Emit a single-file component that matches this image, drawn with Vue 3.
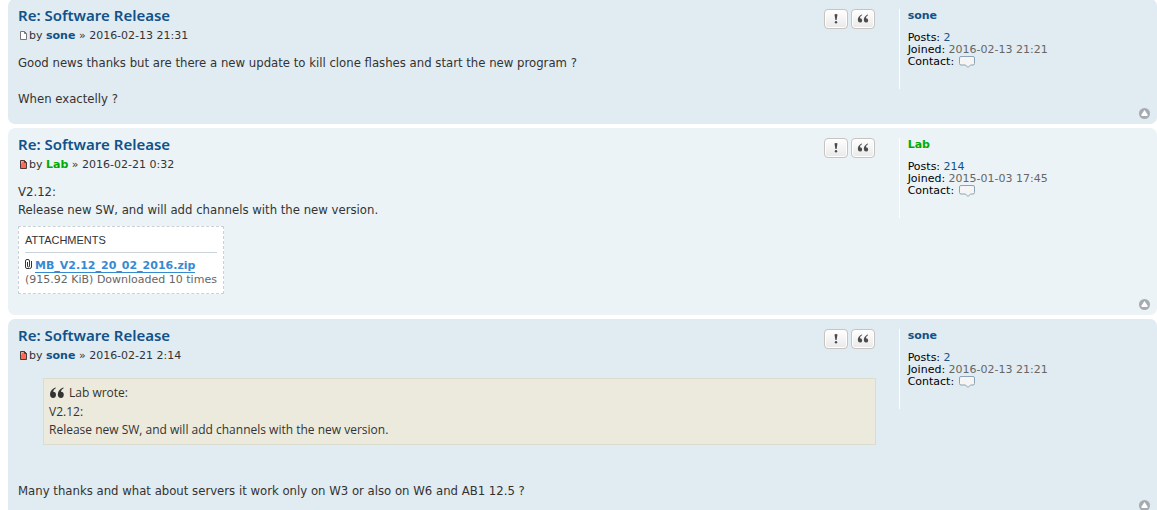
<script setup>
const posts = [
  {
    id: 1, tone: 'bg2', unread: false, title: 'Re: Software Release', author: 'sone', admin: false,
    date: '2016-02-13 21:31', count: '2', joined: '2016-02-13 21:21',
    lines: ['Good news thanks but are there a new update to kill clone flashes and start the new program ?', '', 'When exactelly ?']
  },
  {
    id: 2, tone: 'bg1', unread: true, title: 'Re: Software Release', author: 'Lab', admin: true,
    date: '2016-02-21 0:32', count: '214', joined: '2015-01-03 17:45',
    lines: ['V2.12:', 'Release new SW, and will add channels with the new version.'],
    file: { name: 'MB_V2.12_20_02_2016.zip', info: '(915.92 KiB) Downloaded 10 times' }
  },
  {
    id: 3, tone: 'bg2', unread: true, title: 'Re: Software Release', author: 'sone', admin: false,
    date: '2016-02-21 2:14', count: '2', joined: '2016-02-13 21:21',
    quote: { by: 'Lab wrote:', lines: ['V2.12:', 'Release new SW, and will add channels with the new version.'] },
    lines: ['', 'Many thanks and what about servers it work only on W3 or also on W6 and AB1 12.5 ?']
  }
]
</script>

<template>
  <main class="topic">
    <article v-for="post in posts" :key="post.id" class="post" :class="post.tone">
      <div class="inner">
        <div class="postbody">
          <header class="head">
            <div>
              <h3><a href="#">{{ post.title }}</a></h3>
              <p class="author">
                <a href="#" class="page-icon" aria-label="Post">
                  <svg width="11" height="12" viewBox="0 0 11 12">
                    <path d="M2.5 1.5h4l2 2v6h-6z" :fill="post.unread ? '#ff6a50' : '#fff'" :stroke="post.unread ? '#4a3c3c' : '#777'" />
                    <path d="M6.5 1.5v2h2" fill="none" :stroke="post.unread ? '#4a3c3c' : '#777'" />
                    <path v-if="post.unread" d="M3.5 4.5v-2h2" fill="none" stroke="#ffa890" />
                  </svg>
                </a>by <a href="#" class="username" :class="{ admin: post.admin }">{{ post.author }}</a> » {{ post.date }}
              </p>
            </div>
            <div class="buttons">
              <button type="button" aria-label="Report this post">
                <svg width="14" height="12" viewBox="0 0 14 12" fill="#4b4b4b">
                  <path d="M5.5 1.6Q5.6 1 7 1T8.5 1.6L7.6 7H6.4z" />
                  <circle cx="7" cy="9.2" r="1.200" />
                </svg>
              </button>
              <button type="button" aria-label="Reply with quote">
                <svg width="14" height="12" viewBox="0 0 14 12" fill="#4b4b4b">
                  <path d="M6.2 2Q3.8 3.2 3.9 5.2Q6.2 5.2 6.2 7.4Q6 9.6 4 9.6Q1.8 9.4 1.8 6.7Q2 3 5.8 1.4z" />
                  <path d="M12.2 2Q9.8 3.2 9.9 5.2Q12.2 5.2 12.2 7.4Q12 9.6 10 9.6Q7.8 9.4 7.8 6.7Q8 3 11.8 1.4z" />
                </svg>
              </button>
            </div>
          </header>
          <blockquote v-if="post.quote">
            <cite>
              <svg width="16" height="12" viewBox="0 0 16 12" fill="#333">
                <path d="M7 1Q4.200 2.700 4.100 4.800Q7 4.800 7 8Q6.700 11 4.200 11Q1 10.800 1 7.200Q1.300 2.600 6.300 .6z" />
                <path d="M14.800 1Q12 2.700 11.900 4.800Q14.800 4.800 14.800 8Q14.500 11 12 11Q8.800 10.800 8.800 7.200Q9.100 2.600 14.100 .6z" />
              </svg>
              <span>{{ post.quote.by }}</span>
            </cite>
            <p v-for="(line, i) in post.quote.lines" :key="i">{{ line }}</p>
          </blockquote>
          <div class="content">
            <p v-for="(line, i) in post.lines" :key="i">{{ line }}</p>
          </div>
          <dl v-if="post.file" class="attachbox">
            <dt>Attachments</dt>
            <dd>
              <svg width="7" height="12" viewBox="0 0 7 12" fill="none" stroke="#333">
                <path d="M2.500 3v4q0 1 1 1t1-1V2Q4.500 .500 3 .500H2Q.500 .500 .500 2v6q0 1.500 1.500 1.500h2.500q2 0 2-1.500V2" />
              </svg>
              <a href="#">{{ post.file.name }}</a>
            </dd>
            <dd>{{ post.file.info }}</dd>
          </dl>
        </div>
        <aside class="profile">
          <a href="#" class="username" :class="{ admin: post.admin }">{{ post.author }}</a>
          <ul>
            <li>Posts: <a href="#">{{ post.count }}</a></li>
            <li>Joined: <span>{{ post.joined }}</span></li>
            <li class="contact">
              Contact:
              <button type="button" aria-label="Contact">
                <svg width="16" height="12" viewBox="0 0 16 12">
                  <path d="M2 .5h12q1.500 0 1.500 1.500v5.500q0 1.500-1.500 1.500h-2.500l-2.500 2.500l-2.500-2.500H2Q.5 9 .5 7.500V2Q.5 .5 2 .5z" fill="#f5f5f5" stroke="#8fa3b5" />
                </svg>
              </button>
            </li>
          </ul>
        </aside>
      </div>
      <a href="#" class="top" aria-label="Top">
        <svg width="11" height="11" viewBox="0 0 11 11">
          <circle cx="5.5" cy="5.5" r="5.500" fill="#a5abb0" />
          <path d="M5.500 2L8.500 6.500V8h-6V6.500z" fill="#fff" />
        </svg>
      </a>
    </article>
  </main>
</template>

<style>
html { overflow: hidden; background: #fff; }
</style>

<style scoped>
.topic {
  display: flex;
  flex-direction: column;
  gap: 4px;
  margin: -1px 0 0 8px;
  font: 11px/12px Verdana, "DejaVu Sans", sans-serif;
  color: #333;
}
h3, p, dl, dt, dd, ul, blockquote { margin: 0; padding: 0; }
a { color: #105289; text-decoration: none; }
svg { display: block; }
button { padding: 0; border: 0; background: none; cursor: pointer; }
.post { padding: 5px 7px 5px 10px; border-radius: 7px; }
.bg1 { background: #ebf3f7; }
.bg2 { background: #e1ebf2; }
.inner { display: flex; justify-content: space-between; margin-right: 3px; }
.postbody { width: 76%; }
.head { display: flex; justify-content: space-between; height: 50px; }
h3 { padding-top: 1px; font: 600 15px/20px "Noto Sans", sans-serif; }
.author { display: flex; align-items: center; white-space: pre; height: 22px; }
.username { font-weight: bold; }
.profile .username { display: block; }
.username.admin { color: #00aa00; }
.buttons { display: flex; gap: 3px; padding: 5px 1px 0 0; }
.buttons button {
  display: grid;
  place-items: center;
  width: 24px;
  height: 20px;
  border: 1px solid #c7c3bf;
  border-radius: 4px;
  background: linear-gradient(#fff, #e9e9e9);
  box-shadow: inset 0 0 0 1px #fff;
}
.content { font: 13px/18px "DejaVu Sans Condensed", sans-serif; }
.content p { min-height: 18px; }
blockquote {
  margin: 4px 0 19px 25px;
  padding: 4px 5px 5px;
  border: 1px solid #dbdbce;
  background: #ebeadd;
  font: 12px/18px "Open Sans", sans-serif;
}
cite { display: flex; align-items: center; gap: 4px; height: 20px; font-style: normal; }
.attachbox {
  width: max-content;
  margin: 7px 0 5px;
  padding: 6px;
  border: 1px dashed #c9d2d8;
  background: #fff;
  line-height: 14px;
  color: #666;
}
.attachbox dt {
  margin-bottom: 6px;
  padding-bottom: 5px;
  border-bottom: 1px solid #c9d2d8;
  font-family: "Liberation Sans", Arial, sans-serif;
  text-transform: uppercase;
  color: #333;
}
.attachbox dd { display: flex; align-items: flex-start; gap: 3px; }
.attachbox a { border-bottom: 1px solid #368ad2; font-weight: bold; line-height: 13px; color: #368ad2; }
.profile {
  box-sizing: border-box;
  width: 22%;
  height: 80px;
  margin-top: 5px;
  padding: 1px 0 0 8px;
  border-left: 1px solid #fff;
  color: #000;
}
.profile ul { margin-top: 10px; list-style: none; }
.profile span { color: #666; }
.contact { display: flex; gap: 5px; }
.top { display: block; width: 11px; margin-left: auto; }
</style>
